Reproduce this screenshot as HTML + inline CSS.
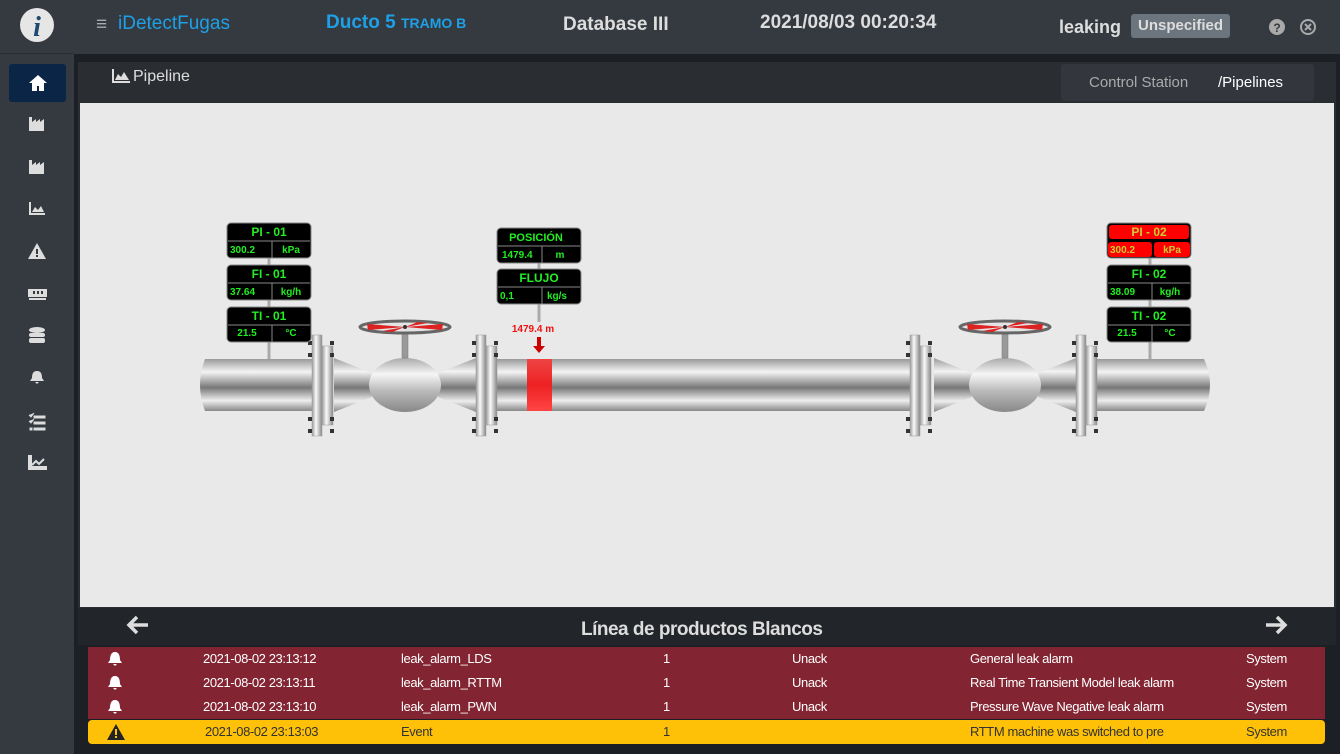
<!DOCTYPE html>
<html><head><meta charset="utf-8"><style>
*{margin:0;padding:0;box-sizing:border-box}
body{width:1340px;height:754px;background:#1c1f23;font-family:"Liberation Sans",sans-serif;position:relative;overflow:hidden;color:#fff}
.side{position:absolute;left:0;top:0;width:74px;height:754px;background:#343a40}
.logo{position:absolute;left:0;top:0;width:74px;height:54px;border-bottom:1px solid #2a2e33}
.top{position:absolute;left:74px;top:0;width:1266px;height:54px;background:#343a40}
.t{position:absolute;white-space:nowrap}
.home{position:absolute;left:9px;top:64px;width:57px;height:38px;background:#0b2546;border-radius:3px}
.card{position:absolute;left:78px;top:62px;width:1258px;height:583px;background:#2a2e33}
.canvas{position:absolute;left:80px;top:103px;width:1254px;height:504px;background:#e9e9e9}
.bc{position:absolute;left:1061px;top:64px;width:253px;height:37px;background:#33373d;border-radius:3px}
.row{position:absolute;left:88px;width:1237px;height:24px;background:#822431;font-size:13px;letter-spacing:-0.4px;color:#fff}
.row span{position:absolute;top:4px;white-space:nowrap}
.row svg{position:absolute;left:19px;top:4px}
</style></head><body>
<div class="side"></div>
<div class="logo"><svg width="74" height="54"><circle cx="37" cy="25" r="17" fill="#e6e6e6"/><text x="37" y="36" text-anchor="middle" font-family="Liberation Serif" font-style="italic" font-weight="bold" font-size="28" fill="#1d4a6e">i</text></svg></div>
<div class="top"></div>
<div class="t" style="left:96px;top:14px;font-size:19px;color:#aaa">&#8801;</div>
<div class="t" style="left:118px;top:13px;font-size:19px;color:#1ea0e6">iDetectFugas</div>
<div class="t" style="left:326px;top:12px;font-size:19px;color:#1ea0e6;font-weight:bold">Ducto 5 <span style="font-size:14px">TRAMO B</span></div>
<div class="t" style="left:563px;top:14px;font-size:19px;color:#ddd;font-weight:bold">Database III</div>
<div class="t" style="left:760px;top:12px;font-size:19px;color:#ddd;font-weight:bold">2021/08/03 00:20:34</div>
<div class="t" style="left:1059px;top:17px;font-size:18px;color:#ddd;font-weight:bold">leaking</div>
<div class="t" style="left:1131px;top:14px;width:99px;height:24px;background:#6c757d;border-radius:3px;font-size:15px;font-weight:bold;color:#ddd;text-align:center;line-height:23px">Unspecified</div>
<svg class="t" style="left:1268px;top:18px" width="18" height="18"><circle cx="9" cy="9" r="8" fill="#aaa"/><text x="9" y="14" text-anchor="middle" font-size="12" font-weight="bold" fill="#343a40">?</text></svg>
<svg class="t" style="left:1299px;top:18px" width="18" height="18"><circle cx="9" cy="9" r="7" fill="none" stroke="#aaa" stroke-width="2"/><path d="M6 6l6 6M12 6l-6 6" stroke="#aaa" stroke-width="2"/></svg>
<div class="home"><svg style="position:absolute;left:19px;top:10px" width="20" height="18"><path d="M10 1L1 9h3v8h5v-5h2v5h5V9h3z" fill="#fff"/></svg></div>
<svg style="position:absolute;left:28px;top:115px" width="20" height="370" fill="#ddd">
<path d="M1 2h3v5l4-3v3l4-3v3l4-3v12H1z"/>
<path d="M1 45h3v5l4-3v3l4-3v3l4-3v12H1z"/>
<path d="M1 87v13h16v-2H3V87zM4 97l3-5 3 3 3-4 3 6z"/>
<path d="M9 128l9 16H0z"/><rect x="8" y="134" width="2" height="5" fill="#343a40"/><rect x="8" y="140" width="2" height="2" fill="#343a40"/>
<rect x="0" y="174" width="19" height="8"/><rect x="5" y="176" width="2" height="3" fill="#343a40"/><rect x="9" y="176" width="2" height="3" fill="#343a40"/><rect x="13" y="176" width="2" height="3" fill="#343a40"/><rect x="1" y="183" width="17" height="2"/>
<ellipse cx="9" cy="215" rx="8" ry="3"/><rect x="1" y="218" width="16" height="4" rx="2"/><rect x="1" y="223" width="16" height="5" rx="2"/>
<path d="M9 256c4 0 5 3 5 7l2 3H2l2-3c0-4 1-7 5-7zM7 267h4l-2 2z"/>
<path d="M1 300l2 2 3-4M1 306l2 2 3-4M6 301h11v2H6zM6 307h11v2H6zM6 313h11v2H6zM2 313h2v2H2z" stroke="#ddd" stroke-width="1"/>
<path d="M1 341v13h17v-2H3v-11zM4 350l4-4 3 3 5-5" stroke="#ddd" stroke-width="2" fill="none"/>
</svg>
<div class="card"></div>
<svg class="t" style="left:112px;top:69px" width="18" height="14"><path d="M0 0v14h18v-2H2V0zM3 11l3-6 3 3 3-5 5 8z" fill="#ddd"/></svg>
<div class="t" style="left:133px;top:68px;font-size:16px;color:#ddd">Pipeline</div>
<div class="bc"></div>
<div class="t" style="left:1089px;top:74px;font-size:15px;color:#aaa">Control Station</div>
<div class="t" style="left:1218px;top:74px;font-size:15px;color:#fff">/Pipelines</div>
<div class="canvas">
<svg width="1254" height="504" viewBox="80 103 1254 504">
<defs>
<linearGradient id="pg" x1="0" y1="0" x2="0" y2="1">
<stop offset="0" stop-color="#9a9a9a"/><stop offset=".25" stop-color="#f4f4f4"/><stop offset=".55" stop-color="#777"/><stop offset=".8" stop-color="#eee"/><stop offset="1" stop-color="#888"/></linearGradient>
<linearGradient id="fg" x1="0" y1="0" x2="1" y2="0"><stop offset="0" stop-color="#999"/><stop offset=".4" stop-color="#fafafa"/><stop offset="1" stop-color="#888"/></linearGradient>
<linearGradient id="bg" x1="0" y1="0" x2="0" y2="1"><stop offset="0" stop-color="#aaa"/><stop offset=".3" stop-color="#f6f6f6"/><stop offset=".6" stop-color="#bbb"/><stop offset="1" stop-color="#888"/></linearGradient>
<linearGradient id="rg" x1="0" y1="0" x2="0" y2="1"><stop offset="0" stop-color="#e44"/><stop offset=".5" stop-color="#e22"/><stop offset="1" stop-color="#f44"/></linearGradient>
<g id="fl">
<rect x="312" y="335" width="10" height="101" fill="url(#fg)" stroke="#999" stroke-width=".5"/><rect x="322" y="346" width="11" height="79" fill="url(#fg)" stroke="#999" stroke-width=".5"/>
<g fill="#333"><rect x="308" y="341" width="4" height="4"/><rect x="308" y="353" width="4" height="4"/><rect x="308" y="417" width="4" height="4"/><rect x="308" y="429" width="4" height="4"/>
<rect x="330" y="341" width="4" height="4"/><rect x="330" y="353" width="4" height="4"/><rect x="330" y="417" width="4" height="4"/><rect x="330" y="429" width="4" height="4"/></g>
</g>
<g id="v1">
<path d="M334 358L372 373V397L334 412z" fill="url(#pg)"/>
<path d="M476 358L438 373V397L476 412z" fill="url(#pg)"/>
<ellipse cx="405" cy="385" rx="36" ry="27" fill="url(#bg)"/>
<rect x="402" y="333" width="6" height="25" fill="#999" stroke="#777" stroke-width=".5"/>
<ellipse cx="405" cy="327" rx="45" ry="6" fill="#e4e4e4" stroke="#666" stroke-width="3"/>
<path d="M405 327L367 324L368 330zM405 327L443 324L442 330zM405 327L418 322L428 323zM405 327L392 332L382 331z" fill="#d22"/>
<circle cx="405" cy="327" r="2" fill="#333"/>
</g>
</defs>
<path d="M205 359H322V411H205Q195 385 205 359z" fill="url(#pg)"/>
<rect x="486" y="359" width="436" height="52" fill="url(#pg)"/>
<path d="M1086 359H1204Q1216 385 1204 411H1086z" fill="url(#pg)"/>
<rect x="527" y="359" width="25" height="52" fill="url(#rg)"/>
<use href="#v1"/><use href="#v1" x="600"/>
<use href="#fl"/><use href="#fl" x="164"/><use href="#fl" x="598"/><use href="#fl" x="764"/>
<g stroke="#aaa" stroke-width="3">
<line x1="269" y1="258" x2="269" y2="359"/><line x1="1150" y1="258" x2="1150" y2="359"/><line x1="539" y1="263" x2="539" y2="322"/></g>
<text x="533" y="332" text-anchor="middle" font-size="10" font-weight="bold" fill="#e11">1479.4 m</text>
<path d="M537 337h4v9h4l-6 7-6-7h4z" fill="#c00"/>
<g font-size="11" font-weight="bold" fill="#2e2">
<g id="b1"><rect x="227" y="223" width="84" height="35" rx="4" fill="#000" stroke="#888"/><line x1="228" y1="241" x2="310" y2="241" stroke="#888"/><line x1="272" y1="241" x2="272" y2="258" stroke="#888"/></g>
<text x="269" y="236" text-anchor="middle" font-size="12">PI - 01</text><text x="230" y="253" font-size="10">300.2</text><text x="291" y="253" text-anchor="middle" font-size="10">kPa</text>
<use href="#b1" y="42"/><text x="269" y="278" text-anchor="middle" font-size="12">FI - 01</text><text x="230" y="295" font-size="10">37.64</text><text x="291" y="295" text-anchor="middle" font-size="10">kg/h</text>
<use href="#b1" y="84"/><text x="269" y="320" text-anchor="middle" font-size="12">TI - 01</text><text x="247" y="336" text-anchor="middle" font-size="10">21.5</text><text x="291" y="336" text-anchor="middle" font-size="10">°C</text>
<use href="#b1" x="270" y="5"/><text x="536" y="241" text-anchor="middle">POSICIÓN</text><text x="502" y="258" font-size="10">1479.4</text><text x="560" y="258" text-anchor="middle" font-size="10">m</text>
<use href="#b1" x="270" y="46"/><text x="539" y="282" text-anchor="middle" font-size="12">FLUJO</text><text x="500" y="299" font-size="10">0,1</text><text x="557" y="299" text-anchor="middle" font-size="10">kg/s</text>
<rect x="1107" y="223" width="84" height="35" rx="4" fill="#000" stroke="#888"/><rect x="1109" y="225" width="80" height="14" rx="3" fill="#f00"/><rect x="1108" y="242" width="44" height="15" rx="3" fill="#f00"/><rect x="1154" y="242" width="36" height="15" rx="3" fill="#f00"/>
<g fill="#cc3"><text x="1149" y="236" text-anchor="middle" font-size="12">PI - 02</text><text x="1110" y="253" font-size="10">300.2</text><text x="1172" y="253" text-anchor="middle" font-size="10">kPa</text></g>
<use href="#b1" x="880" y="42"/><text x="1149" y="278" text-anchor="middle" font-size="12">FI - 02</text><text x="1110" y="295" font-size="10">38.09</text><text x="1170" y="295" text-anchor="middle" font-size="10">kg/h</text>
<use href="#b1" x="880" y="84"/><text x="1127" y="336" text-anchor="middle" font-size="10">21.5</text><text x="1170" y="336" text-anchor="middle" font-size="10">°C</text><text x="1149" y="320" text-anchor="middle" font-size="12">TI - 02</text>
</g>
</svg>
</div>
<div class="t" style="left:78px;top:608px;width:1258px;height:37px;background:#222529"></div>
<svg class="t" style="left:126px;top:615px" width="24" height="20"><path d="M22 10H4M11 2L3 10l8 8" stroke="#ddd" stroke-width="3.5" fill="none"/></svg>
<svg class="t" style="left:1264px;top:615px" width="24" height="20"><path d="M2 10h18M13 2l8 8-8 8" stroke="#ddd" stroke-width="3.5" fill="none"/></svg>
<div class="t" style="left:581px;top:619px;font-size:19px;font-weight:bold;color:#ddd;letter-spacing:-0.5px">Línea de productos Blancos</div>
<div class="row" style="top:647px"><svg width="16" height="16"><path d="M8 1c4 0 5 4 5 8l2 3H1l2-3c0-4 1-8 5-8zM6 13h4l-2 2z" fill="#fff"/></svg><span style="left:115px">2021-08-02 23:13:12</span><span style="left:313px">leak_alarm_LDS</span><span style="left:575px">1</span><span style="left:704px">Unack</span><span style="left:882px">General leak alarm</span><span style="left:1158px">System</span></div>
<div class="row" style="top:671px"><svg width="16" height="16"><path d="M8 1c4 0 5 4 5 8l2 3H1l2-3c0-4 1-8 5-8zM6 13h4l-2 2z" fill="#fff"/></svg><span style="left:115px">2021-08-02 23:13:11</span><span style="left:313px">leak_alarm_RTTM</span><span style="left:575px">1</span><span style="left:704px">Unack</span><span style="left:882px">Real Time Transient Model leak alarm</span><span style="left:1158px">System</span></div>
<div class="row" style="top:695px"><svg width="16" height="16"><path d="M8 1c4 0 5 4 5 8l2 3H1l2-3c0-4 1-8 5-8zM6 13h4l-2 2z" fill="#fff"/></svg><span style="left:115px">2021-08-02 23:13:10</span><span style="left:313px">leak_alarm_PWN</span><span style="left:575px">1</span><span style="left:704px">Unack</span><span style="left:882px">Pressure Wave Negative leak alarm</span><span style="left:1158px">System</span></div>
<div class="row" style="top:720px;background:#fec107;color:#333;border-radius:4px"><svg width="18" height="16"><path d="M9 0l9 16H0z" fill="#222"/><rect x="8" y="5" width="2" height="6" fill="#fec107"/><rect x="8" y="12" width="2" height="2" fill="#fec107"/></svg><span style="left:117px">2021-08-02 23:13:03</span><span style="left:313px">Event</span><span style="left:575px">1</span><span style="left:882px">RTTM machine was switched to pre</span><span style="left:1158px">System</span></div>
</body></html>
